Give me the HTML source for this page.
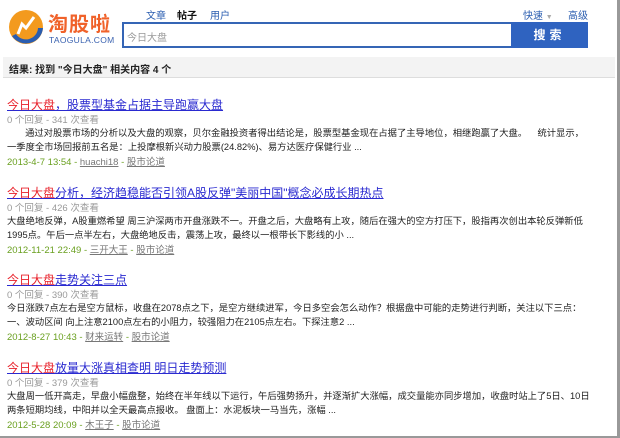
<!DOCTYPE html>
<html><head><meta charset="utf-8"><style>
*{margin:0;padding:0;box-sizing:border-box}
body{width:620px;height:438px;background:#fff;font-family:"Liberation Sans","Noto Sans CJK SC",sans-serif;position:relative;overflow:hidden;border-right:3px solid #999;border-bottom:2px solid #999}
.a{position:absolute;white-space:nowrap}
.t{font-size:12px;color:#2a2ad0;text-decoration:underline;left:7px}
.t b{color:#e8202a;font-weight:normal}
.m{font-size:9.5px;color:#999;left:7px}
.d{font-size:9.3px;color:#222;left:7px;line-height:14px}
.dt{font-size:9.5px;color:#6aa020;left:7px}
.dt u{color:#777}
</style></head><body>
<svg class="a" style="left:8px;top:8px" width="38" height="38" viewBox="0 0 38 38">
<circle cx="18" cy="19" r="17" fill="#f39a1e"/>
<path d="M4 28 A17 17 0 0 0 35 20 L30 20 A12 12 0 0 1 8 26 Z" fill="#2a5db0"/>
<path d="M10 26 L14 16 L18 20 L26 9" stroke="#fff" stroke-width="3" fill="none"/>
</svg>
<div class="a" style="left:48px;top:8px;font-size:20px;font-weight:bold;color:#f0622a;letter-spacing:1px">淘股啦</div>
<div class="a" style="left:49px;top:35px;font-size:8.5px;color:#3a62b0;letter-spacing:0.3px">TAOGULA.COM</div>
<div class="a" style="left:146px;top:7px;font-size:10px;color:#2a5db0">文章</div>
<div class="a" style="left:177px;top:7px;font-size:10px;color:#111;font-weight:bold">帖子</div>
<div class="a" style="left:210px;top:7px;font-size:10px;color:#2a5db0">用户</div>
<div class="a" style="left:523px;top:7px;font-size:10px;color:#2a5db0">快速 <span style="color:#aaa;font-size:7px">▼</span></div>
<div class="a" style="left:568px;top:7px;font-size:10px;color:#2a5db0">高级</div>
<div class="a" style="left:122px;top:22px;width:466px;height:26px;border:2px solid #3565b5;background:#fff"></div>
<div class="a" style="left:127px;top:29px;font-size:10px;color:#999">今日大盘</div>
<div class="a" style="left:511px;top:22px;width:77px;height:26px;background:#2f63c0;color:#fff;font-size:12px;font-weight:bold;text-align:center;line-height:26px;letter-spacing:4px">搜索</div>
<div class="a" style="left:3px;top:57px;width:612px;height:21px;background:#f3f3f3;border-bottom:1px solid #ddd"></div>
<div class="a" style="left:9px;top:61px;font-size:10px;font-weight:bold;color:#222">结果: 找到 "今日大盘" 相关内容 4 个</div>

<div class="a t" style="top:96px"><b>今日大盘</b>，股票型基金占据主导跑赢大盘</div>
<div class="a m" style="top:112px">0 个回复 - 341 次查看</div>
<div class="a d" style="top:126px">&nbsp;&nbsp;&nbsp;&nbsp;&nbsp;&nbsp;&nbsp;通过对股票市场的分析以及大盘的观察，贝尔金融投资者得出结论是，股票型基金现在占据了主导地位，相继跑赢了大盘。&nbsp;&nbsp;&nbsp;&nbsp;统计显示，<br>一季度全市场回报前五名是：上投摩根新兴动力股票(24.82%)、易方达医疗保健行业 ...</div>
<div class="a dt" style="top:154px">2013-4-7 13:54 - <u>huachi18</u> - <u>股市论道</u></div>

<div class="a t" style="top:184px"><b>今日大盘</b>分析，经济趋稳能否引领A股反弹"美丽中国"概念必成长期热点</div>
<div class="a m" style="top:200px">0 个回复 - 426 次查看</div>
<div class="a d" style="top:214px">大盘绝地反弹，A股重燃希望 周三沪深两市开盘涨跌不一。开盘之后，大盘略有上攻，随后在强大的空方打压下，股指再次创出本轮反弹新低<br>1995点。午后一点半左右，大盘绝地反击，震荡上攻，最终以一根带长下影线的小 ...</div>
<div class="a dt" style="top:242px">2012-11-21 22:49 - <u>三开大王</u> - <u>股市论道</u></div>

<div class="a t" style="top:271px"><b>今日大盘</b>走势关注三点</div>
<div class="a m" style="top:287px">0 个回复 - 390 次查看</div>
<div class="a d" style="top:301px">今日涨跌7点左右是空方鼠标，收盘在2078点之下，是空方继续进军，今日多空会怎么动作？根据盘中可能的走势进行判断，关注以下三点：<br>一、波动区间 向上注意2100点左右的小阻力，较强阻力在2105点左右。下探注意2 ...</div>
<div class="a dt" style="top:329px">2012-8-27 10:43 - <u>财来运转</u> - <u>股市论道</u></div>

<div class="a t" style="top:359px"><b>今日大盘</b>放量大涨真相查明 明日走势预测</div>
<div class="a m" style="top:375px">0 个回复 - 379 次查看</div>
<div class="a d" style="top:389px">大盘周一低开高走，早盘小幅盘整，始终在半年线以下运行，午后强势扬升，并逐渐扩大涨幅，成交量能亦同步增加，收盘时站上了5日、10日<br>两条短期均线，中阳并以全天最高点报收。 盘面上：水泥板块一马当先，涨幅 ...</div>
<div class="a dt" style="top:417px">2012-5-28 20:09 - <u>木王子</u> - <u>股市论道</u></div>
</body></html>
